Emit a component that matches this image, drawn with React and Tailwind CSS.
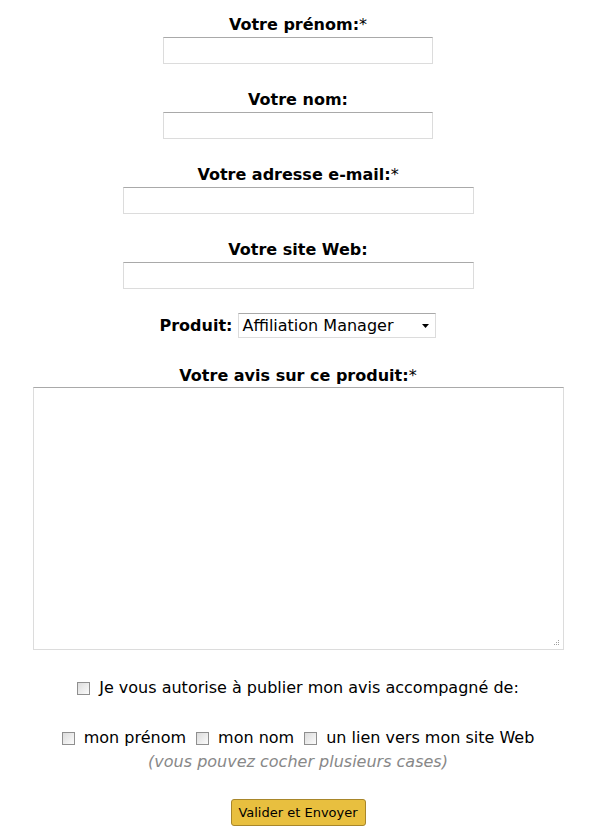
const Box = () => (
  <span className="inline-block w-[13px] h-[13px] border border-[#8f8f8f] bg-gradient-to-br from-[#dcdcdc] to-[#fbfbfb] align-[-1px]" />
);

const Field = ({ label, req, w }) => (
  <div className="flex flex-col items-center">
    <div className="font-bold text-[16px] leading-[18px]">
      {label}
      {req && <span className="font-normal">*</span>}
    </div>
    <div className={`${w} h-[27px] mt-[3px] border border-[#dcdcdc] border-t-[#a9a9a9] bg-white`} />
  </div>
);

export default function App() {
  return (
    <div className="w-[596px] h-[840px] bg-white text-black font-['DejaVu_Sans',Verdana,sans-serif] pt-[16px]">
      <div className="flex flex-col items-center gap-[27px]">
        <Field label="Votre prénom:" req w="w-[270px]" />
        <Field label="Votre nom:" w="w-[270px]" />
        <Field label="Votre adresse e-mail:" req w="w-[351px]" />
        <Field label="Votre site Web:" w="w-[351px]" />
      </div>

      <div className="flex items-center justify-center mt-[24px]">
        <span className="font-bold text-[16px] mr-[6px]">Produit:</span>
        <div className="w-[198px] h-[25px] border border-[#dcdcdc] border-t-[#a9a9a9] flex items-center justify-between pl-[3px] pr-[6px] text-[16px]">
          <span>Affiliation Manager</span>
          <svg width="7" height="4" viewBox="0 0 7 4"><path d="M0 0h7L3.5 4z" fill="#000" /></svg>
        </div>
      </div>

      <div className="flex flex-col items-center mt-[29px]">
        <div className="font-bold text-[16px] leading-[18px]">
          Votre avis sur ce produit:<span className="font-normal">*</span>
        </div>
        <div className="relative w-[531px] h-[263px] mt-[2px] border border-[#dcdcdc] border-t-[#a9a9a9] bg-white">
          <svg className="absolute right-[3px] bottom-[3px]" width="7" height="7" viewBox="0 0 7 7" fill="#a0a0a0">
            <rect x="5" y="1" width="1" height="1" />
            <rect x="3" y="3" width="1" height="1" />
            <rect x="5" y="3" width="1" height="1" />
            <rect x="1" y="5" width="1" height="1" />
            <rect x="3" y="5" width="1" height="1" />
            <rect x="5" y="5" width="1" height="1" />
          </svg>
        </div>
      </div>

      <div className="flex items-center justify-center gap-[9px] mt-[26px] text-[16px]">
        <Box />
        <span>Je vous autorise à publier mon avis accompagné de:</span>
      </div>

      <div className="flex items-center justify-center mt-[26px] text-[16px]">
        <Box />
        <span className="ml-[9px] mr-[10px]">mon prénom</span>
        <Box />
        <span className="ml-[9px] mr-[10px]">mon nom</span>
        <Box />
        <span className="ml-[9px]">un lien vers mon site Web</span>
      </div>
      <div className="text-center italic text-[#888] text-[16px] mt-0">(vous pouvez cocher plusieurs cases)</div>

      <div className="flex justify-center mt-[25px]">
        <button className="w-[135px] h-[27px] bg-[#e8bf3f] border border-[#a8862a] rounded-[3px] text-[13px] text-black">
          Valider et Envoyer
        </button>
      </div>
    </div>
  );
}
